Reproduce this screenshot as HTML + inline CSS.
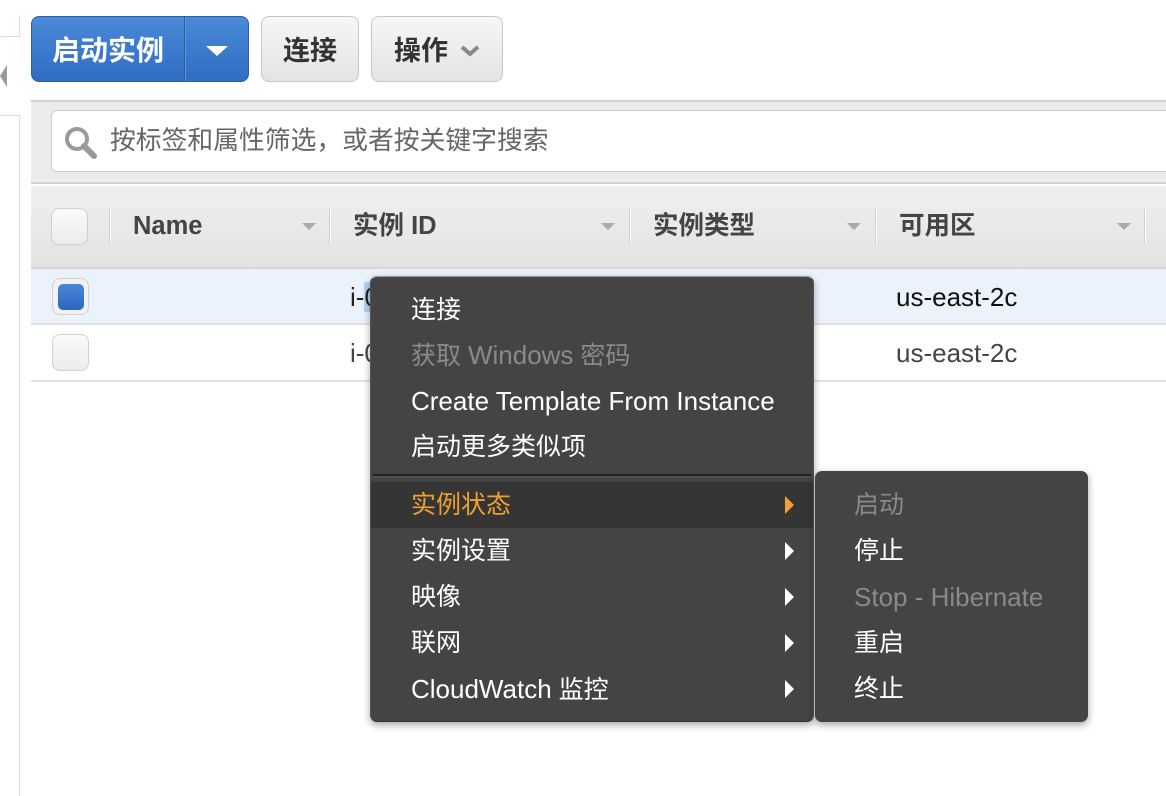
<!DOCTYPE html>
<html><head><meta charset="utf-8"><style>
*{box-sizing:border-box;margin:0;padding:0}
body{width:1166px;height:796px;overflow:hidden;background:#fff;position:relative;font-family:"Liberation Sans","Noto Sans CJK SC",sans-serif}
.a{position:absolute}
.btn{position:absolute;top:16px;height:66px;border:1px solid #c6c6c6;border-radius:8px;background:linear-gradient(#f6f6f6,#e4e4e4);font-size:27px;font-weight:bold;color:#333;display:flex;align-items:center;justify-content:center;line-height:30px;padding-top:3px}
.cb{position:absolute;width:37px;height:37px;border:1px solid #cfcfcf;border-radius:8px;background:linear-gradient(#fafafa,#ececec)}
.th{position:absolute;top:211px;font-size:25.5px;font-weight:bold;color:#444;line-height:30px}
.sep{position:absolute;top:208px;width:2px;height:36px;background:#d0d0d0;border-right:1px solid #fff}
.dt{position:absolute;width:0;height:0;border-left:7px solid transparent;border-right:7px solid transparent;border-top:7px solid #aaa;top:223px}
.mi{position:absolute;left:40px;font-size:25px;color:#fff;white-space:nowrap;line-height:30px}
.mi span,.si span{font-size:26px}
.ar{position:absolute;left:414px;width:0;height:0;border-top:9px solid transparent;border-bottom:9px solid transparent;border-left:9px solid #fff}
.si{position:absolute;left:39px;font-size:25px;color:#fff;white-space:nowrap;line-height:30px}
</style></head><body>
<div class="a" style="left:0;top:36px;width:20px;height:1px;background:#ddd"></div>
<div class="a" style="left:19px;top:15px;width:1px;height:22px;background:#ddd"></div>
<div class="a" style="left:0;top:115px;width:20px;height:1px;background:#ddd"></div>
<div class="a" style="left:19px;top:115px;width:1px;height:681px;background:#ddd"></div>
<div class="a" style="left:0;top:65px;width:0;height:0;border-top:11px solid transparent;border-bottom:11px solid transparent;border-right:7px solid #999"></div>
<div class="a" style="left:31px;top:16px;width:218px;height:66px;border:1px solid #2c5fa8;border-radius:8px;background:linear-gradient(#4a8ad8,#2f6cc2)"></div>
<div class="a" style="left:31px;top:16px;width:154px;height:66px;display:flex;align-items:center;justify-content:center;font-size:28px;font-weight:bold;color:#fff;line-height:30px;padding-top:3px">启动实例</div>
<div class="a" style="left:184px;top:17px;width:1px;height:64px;background:#2a5ca3"></div>
<div class="a" style="left:185px;top:17px;width:1px;height:64px;background:#5d97dc"></div>
<div class="a" style="left:206px;top:46px;width:0;height:0;border-left:11px solid transparent;border-right:11px solid transparent;border-top:10px solid #fff"></div>
<div class="btn" style="left:261px;width:98px">连接</div>
<div class="btn" style="left:371px;width:132px;justify-content:flex-start;padding-left:22px">操作
<svg width="20" height="14" style="margin-left:12px" viewBox="0 0 20 14"><path d="M2 3 L10 10 L18 3" stroke="#888" stroke-width="4" fill="none"/></svg></div>
<div class="a" style="left:31px;top:100px;width:1135px;height:84px;background:#ececec;border-top:2px solid #d2d2d2;border-bottom:2px solid #d2d2d2"></div>
<div class="a" style="left:51px;top:110px;width:1130px;height:62px;background:#fff;border:1px solid #cdcdcd;border-radius:6px"></div>
<svg class="a" style="left:63px;top:125px" width="36" height="36" viewBox="0 0 36 36"><circle cx="14" cy="14" r="10" stroke="#9a9a9a" stroke-width="4" fill="none"/><path d="M21 21 L31 31" stroke="#999" stroke-width="6" stroke-linecap="round"/></svg>
<div class="a" style="left:110px;top:126px;font-size:25.8px;color:#666;line-height:30px">按标签和属性筛选，或者按关键字搜索</div>
<div class="a" style="left:31px;top:185px;width:1135px;height:84px;background:linear-gradient(#efefef,#e3e3e3);border-top:1px solid #fff;border-bottom:2px solid #d6d6d6"></div>
<div class="cb" style="left:51px;top:208px"></div>
<div class="sep" style="left:109px"></div>
<div class="th" style="left:133px">Name</div><div class="dt" style="left:302px"></div>
<div class="sep" style="left:329px"></div>
<div class="th" style="left:353px">实例 ID</div><div class="dt" style="left:601px"></div>
<div class="sep" style="left:629px"></div>
<div class="th" style="left:653px">实例类型</div><div class="dt" style="left:847px"></div>
<div class="sep" style="left:875px"></div>
<div class="th" style="left:899px">可用区</div><div class="dt" style="left:1117px"></div>
<div class="sep" style="left:1144px"></div>
<div class="a" style="left:31px;top:269px;width:1135px;height:56px;background:#eaf2fc;border-bottom:2px solid #e0e0e0"></div>
<div class="a" style="left:31px;top:325px;width:1135px;height:57px;border-bottom:2px solid #e2e2e2"></div>
<div class="cb" style="left:52px;top:278px;background:#f2f2f2"></div>
<div class="a" style="left:58px;top:284px;width:26px;height:26px;border-radius:5px;background:linear-gradient(#4a88d8,#2c66bf)"></div>
<div class="cb" style="left:52px;top:334px"></div>
<div class="a" style="left:350px;top:282px;font-size:26px;color:#222;line-height:30px">i-<span style="background:#b5d3f5">0</span></div>
<div class="a" style="left:350px;top:338px;font-size:26px;color:#444;line-height:30px">i-0</div>
<div class="a" style="left:896px;top:282px;font-size:26px;color:#111;line-height:30px">us-east-2c</div>
<div class="a" style="left:896px;top:338px;font-size:26px;color:#444;line-height:30px">us-east-2c</div>
<div class="a" style="left:370px;top:276px;width:444px;height:446px;background:#444;border-radius:7px;box-shadow:0 3px 8px rgba(0,0,0,.35);border:1px solid #888;border-color:#999 #555 #333 #555">
<div class="mi" style="top:18px">连接</div>
<div class="mi" style="top:63px;color:#8a8a8a">获取 <span>Windows</span> 密码</div>
<div class="mi" style="top:109px"><span>Create Template From Instance</span></div>
<div class="mi" style="top:155px">启动更多类似项</div>
<div class="a" style="left:2px;top:197px;width:438px;height:2px;background:#222"></div>
<div class="a" style="left:2px;top:199px;width:438px;height:2px;background:#4e4e4e"></div>
<div class="a" style="left:0;top:205px;width:442px;height:46px;background:#353535"></div>
<div class="mi" style="top:213px;color:#f0a030">实例状态</div><div class="ar" style="top:219px;border-left-color:#f0a030"></div>
<div class="mi" style="top:259px">实例设置</div><div class="ar" style="top:265px"></div>
<div class="mi" style="top:305px">映像</div><div class="ar" style="top:311px"></div>
<div class="mi" style="top:351px">联网</div><div class="ar" style="top:357px"></div>
<div class="mi" style="top:397px"><span>CloudWatch</span> 监控</div><div class="ar" style="top:403px"></div>
</div>
<div class="a" style="left:815px;top:471px;width:273px;height:251px;background:#444;border-radius:7px;box-shadow:0 3px 8px rgba(0,0,0,.35)">
<div class="si" style="top:19px;color:#8a8a8a">启动</div>
<div class="si" style="top:65px">停止</div>
<div class="si" style="top:111px;color:#8a8a8a"><span>Stop - Hibernate</span></div>
<div class="si" style="top:157px">重启</div>
<div class="si" style="top:203px">终止</div>
</div>
</body></html>
